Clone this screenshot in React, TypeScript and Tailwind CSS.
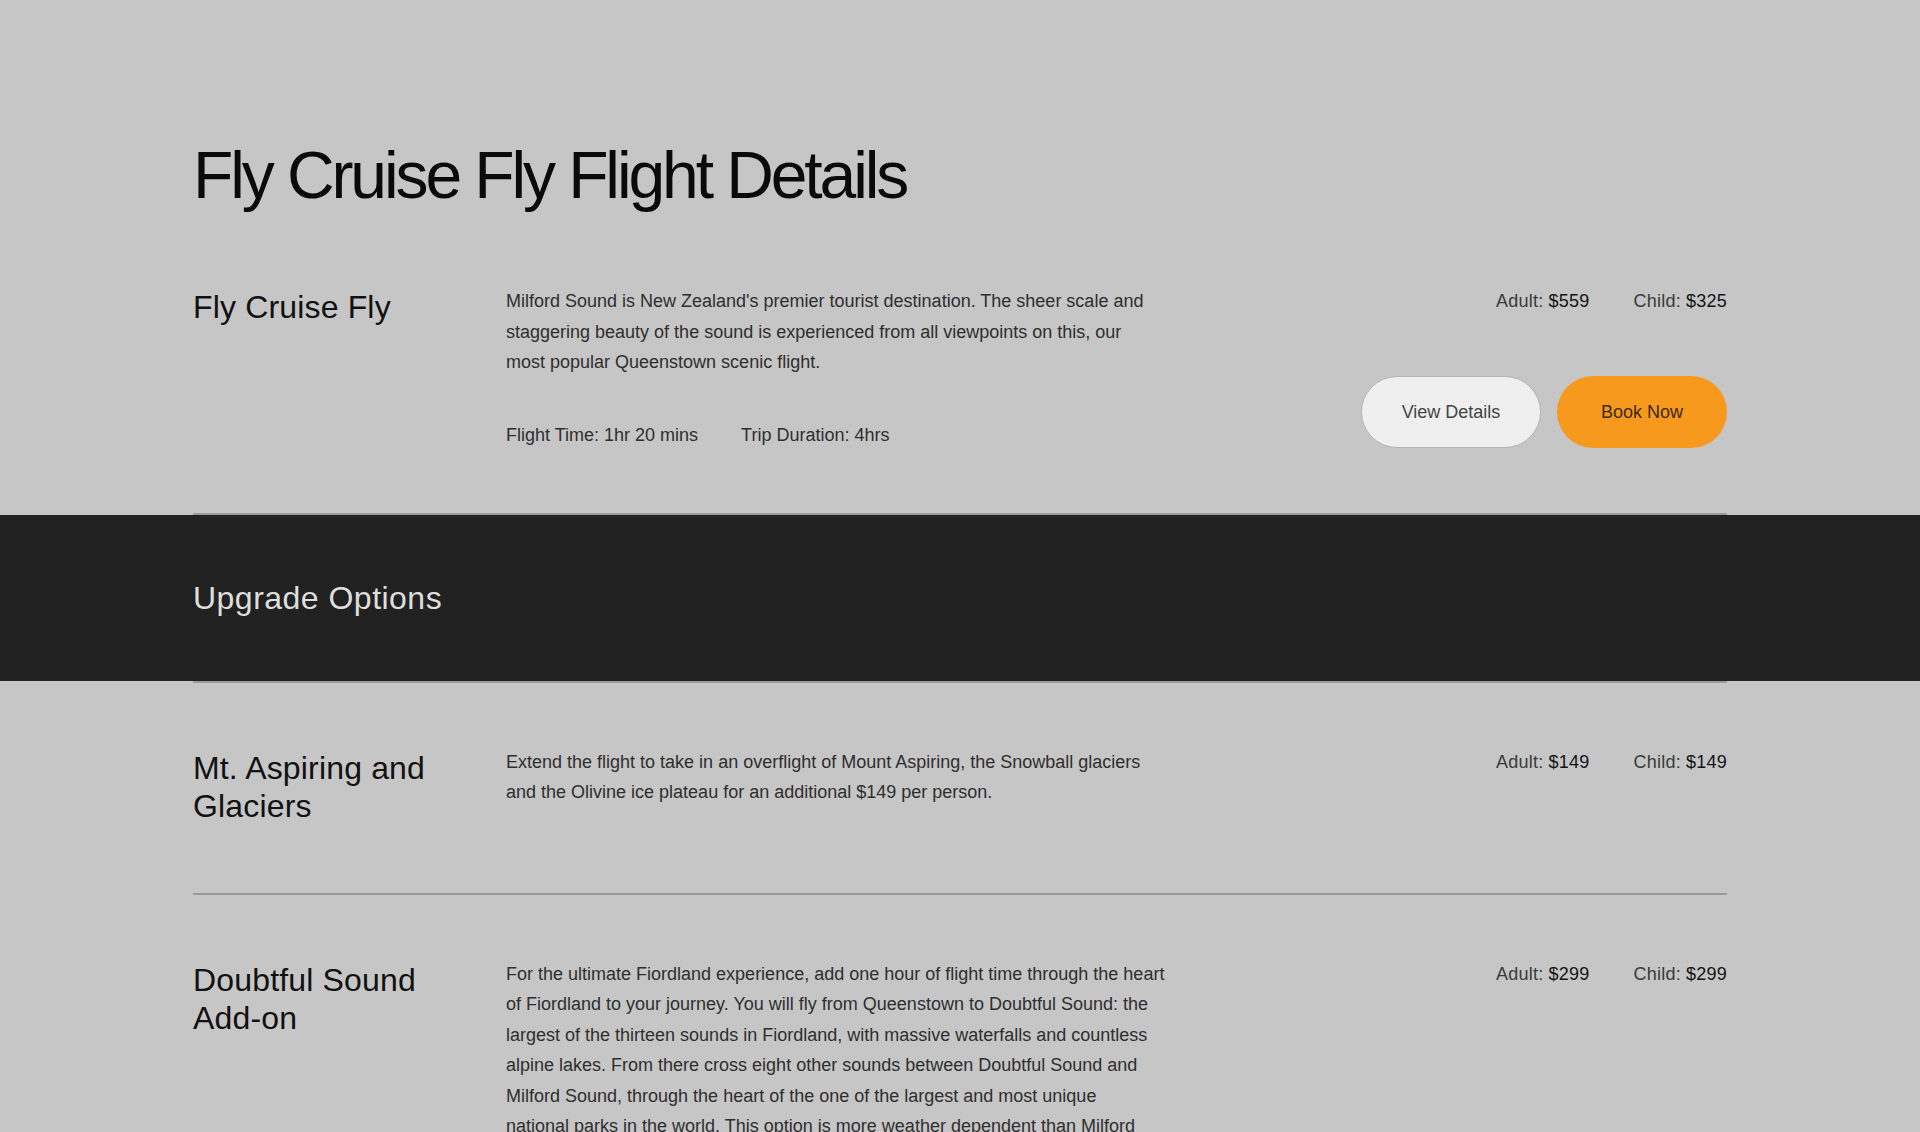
import React from "react";

type Row = {
  title: string;
  lines: string[];
  adult: string;
  child: string;
  meta?: boolean;
  buttons?: boolean;
};

const Prices = ({ adult, child }: { adult: string; child: string }) => (
  <div className="flex items-center gap-[44px] text-[18px] leading-[30px] tracking-[0.012em] text-[#3a3a3a]">
    <span>
      Adult: <span className="text-[#141414]">{adult}</span>
    </span>
    <span>
      Child: <span className="text-[#141414]">{child}</span>
    </span>
  </div>
);

const RowView = ({ row, className }: { row: Row; className: string }) => (
  <div className={"grid grid-cols-[313px_670px_1fr] " + className}>
    <h2 className="mt-[2px] pr-[24px] text-[32px] leading-[1.2] tracking-[0.005em] text-[#111111]">{row.title}</h2>
    <div>
      <p className="text-[18px] leading-[30.5px] text-[#2e2e2e]">
        {row.lines.map((l, i) => (
          <span key={i} className="block whitespace-nowrap">
            {l}
          </span>
        ))}
      </p>
      {row.meta && (
        <div className="mt-[42px] flex gap-[43px] text-[18px] leading-[30px] text-[#2e2e2e]">
          <span>Flight Time: 1hr 20 mins</span>
          <span>Trip Duration: 4hrs</span>
        </div>
      )}
    </div>
    <div className="flex flex-col items-end">
      <Prices adult={row.adult} child={row.child} />
      {row.buttons && (
        <div className="mt-[60px] flex gap-[16px]">
          <button className="flex h-[72px] w-[180px] items-center justify-center rounded-full border border-[#b4b4b4] bg-[#efefef] text-[18px] text-[#444444]">
            View Details
          </button>
          <button className="flex h-[72px] w-[170px] items-center justify-center rounded-full bg-[#f7991c] text-[18px] text-[#3b2a12]">
            Book Now
          </button>
        </div>
      )}
    </div>
  </div>
);

export default function App() {
  const main: Row = {
    title: "Fly Cruise Fly",
    lines: [
      "Milford Sound is New Zealand's premier tourist destination. The sheer scale and",
      "staggering beauty of the sound is experienced from all viewpoints on this, our",
      "most popular Queenstown scenic flight.",
    ],
    adult: "$559",
    child: "$325",
    meta: true,
    buttons: true,
  };
  const aspiring: Row = {
    title: "Mt. Aspiring and Glaciers",
    lines: [
      "Extend the flight to take in an overflight of Mount Aspiring, the Snowball glaciers",
      "and the Olivine ice plateau for an additional $149 per person.",
    ],
    adult: "$149",
    child: "$149",
  };
  const doubtful: Row = {
    title: "Doubtful Sound Add-on",
    lines: [
      "For the ultimate Fiordland experience, add one hour of flight time through the heart",
      "of Fiordland to your journey. You will fly from Queenstown to Doubtful Sound: the",
      "largest of the thirteen sounds in Fiordland, with massive waterfalls and countless",
      "alpine lakes. From there cross eight other sounds between Doubtful Sound and",
      "Milford Sound, through the heart of the one of the largest and most unique",
      "national parks in the world. This option is more weather dependent than Milford",
      "Sound only flights.",
    ],
    adult: "$299",
    child: "$299",
  };

  return (
    <div
      className="min-h-screen bg-[#c6c6c6]"
      style={{ fontFamily: '"Liberation Sans", Arial, Helvetica, sans-serif' }}
    >
      <div className="mx-auto w-[1534px] pt-[142px]">
        <h1 className="mb-[14px] text-[66px] leading-none tracking-[-0.047em] text-[#0a0a0a]">
          Fly Cruise Fly Flight Details
        </h1>
        <RowView row={main} className="border-b-2 border-[#9a9a9a] pt-[64px] pb-[63px]" />
      </div>
      <div className="bg-[#212121]">
        <div className="mx-auto w-[1534px] py-[64px]">
          <h2 className="text-[32px] leading-[1.2] tracking-[0.015em] text-[#dedede]">Upgrade Options</h2>
        </div>
      </div>
      <div className="mx-auto w-[1534px] pb-[120px]">
        <RowView row={aspiring} className="border-y-2 border-[#9a9a9a] pt-[64px] pb-[67px]" />
        <RowView row={doubtful} className="border-b-2 border-[#9a9a9a] pt-[64px] pb-[67px]" />
      </div>
    </div>
  );
}
